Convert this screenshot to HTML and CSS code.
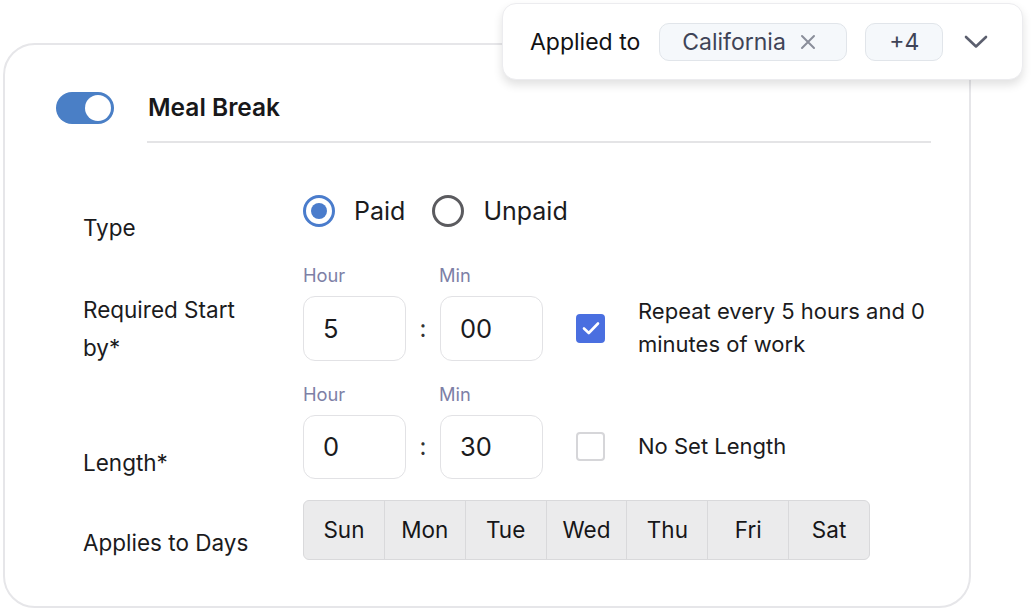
FILE: index.html
```html
<!DOCTYPE html>
<html lang="en">
<head>
<meta charset="utf-8">
<title>Meal Break</title>
<link rel="stylesheet" href="styles.css">
</head>
<body>
<div class="page">
  <div class="card">
    <div class="header">
      <span class="toggle"><span class="knob"></span></span>
      <span class="title">Meal Break</span>
    </div>
    <div class="divider"></div>

    <div class="row row-type">
      <div class="label label-type">Type</div>
      <div class="controls radios">
        <label class="radio"><span class="dot on"></span><span>Paid</span></label>
        <label class="radio"><span class="dot"></span><span>Unpaid</span></label>
      </div>
    </div>

    <div class="row row-start">
      <div class="label label-start">Required Start<br>by*</div>
      <div class="controls time-row">
        <div class="time">
          <div class="caps"><span class="cap">Hour</span><span class="cap">Min</span></div>
          <div class="inputs">
            <div class="field">5</div>
            <span class="colon">:</span>
            <div class="field">00</div>
          </div>
        </div>
        <div class="check-group">
          <span class="check on"><svg width="18" height="14" viewBox="0 0 18 14"><path d="M2 7.5 L6.8 12 L16 2.5" fill="none" stroke="#fff" stroke-width="2.6" stroke-linecap="round" stroke-linejoin="round"/></svg></span>
          <span class="check-text">Repeat every 5 hours and 0<br>minutes of work</span>
        </div>
      </div>
    </div>

    <div class="row row-length">
      <div class="label label-length">Length*</div>
      <div class="controls time-row">
        <div class="time">
          <div class="caps"><span class="cap">Hour</span><span class="cap">Min</span></div>
          <div class="inputs">
            <div class="field field-short">0</div>
            <span class="colon">:</span>
            <div class="field field-short">30</div>
          </div>
        </div>
        <div class="check-group check-group-short">
          <span class="check"></span>
          <span class="check-text">No Set Length</span>
        </div>
      </div>
    </div>

    <div class="row row-days">
      <div class="label label-days">Applies to Days</div>
      <div class="controls">
        <div class="days">
          <span class="day">Sun</span><span class="day">Mon</span><span class="day">Tue</span><span class="day">Wed</span><span class="day">Thu</span><span class="day">Fri</span><span class="day">Sat</span>
        </div>
      </div>
    </div>
  </div>

  <div class="popup">
    <span class="applied">Applied to</span>
    <span class="chip chip-ca">California
      <svg class="x" width="16" height="16" viewBox="0 0 16 16"><path d="M2 2 L14 14 M14 2 L2 14" stroke="#8a8e9a" stroke-width="2" stroke-linecap="round"/></svg>
    </span>
    <span class="chip chip-more">+4</span>
    <svg class="chev" width="24" height="14" viewBox="0 0 24 14"><path d="M2 2 L12 11.5 L22 2" fill="none" stroke="#5b5f6e" stroke-width="2.6" stroke-linecap="round" stroke-linejoin="round"/></svg>
  </div>
</div>
</body>
</html>
```

FILE: styles.css
```css
* { box-sizing: border-box; }
html, body { margin: 0; padding: 0; background: #fff; }
body {
  font-family: Inter, "Noto Sans", "Liberation Sans", sans-serif;
  color: #1b1b1d;
}
.page {
  position: relative;
  width: 1033px;
  height: 610px;
  padding: 43px 0 0 3px;
}
.card {
  width: 968px;
  height: 565px;
  border: 2px solid #e6e6e9;
  border-radius: 32px;
  padding: 47px 0 0 0;
}
.header {
  display: flex;
  align-items: center;
  padding-left: 51px;
  height: 32px;
}
.toggle {
  width: 58px;
  height: 32px;
  border-radius: 16px;
  background: #4a7fc6;
  display: flex;
  align-items: center;
  justify-content: flex-end;
  padding-right: 3px;
}
.knob {
  width: 26px;
  height: 26px;
  border-radius: 50%;
  background: #fff;
}
.title {
  margin-left: 34px;
  margin-bottom: 2px;
  font-size: 24.5px;
  font-weight: 600;
  color: #18181a;
}
.divider {
  margin: 17px 38px 0 142px;
  height: 1.5px;
  background: #e4e4e6;
}
.row {
  display: flex;
  align-items: flex-start;
  padding-left: 78px;
}
.label {
  width: 220px;
  flex: none;
  font-size: 22.5px;
  line-height: 26px;
  color: #1b1b1d;
}
.row-type { margin-top: 52px; height: 70px; }
.label-type { margin-top: 20px; }
.radios { display: flex; align-items: center; gap: 27px; height: 32px; }
.radio { display: flex; align-items: center; gap: 19px; font-size: 25px; color: #1b1b1d; }
.dot {
  width: 32px;
  height: 32px;
  border-radius: 50%;
  border: 3px solid #5b5b5f;
  display: flex;
  align-items: center;
  justify-content: center;
}
.dot.on { border-color: #4a7ccc; }
.dot.on::after {
  content: "";
  width: 16px;
  height: 16px;
  border-radius: 50%;
  background: #4a7ccc;
}
.row-start { height: 119px; }
.label-start { line-height: 38px; margin-top: 26px; }
.row-length { height: 116px; }
.label-length { margin-top: 66px; }
.time-row { display: flex; align-items: flex-end; }
.time { width: 240px; }
.caps { display: flex; height: 20px; margin-bottom: 11px; }
.cap { font-size: 18.3px; line-height: 20px; color: #7d80a6; }
.cap:first-child { width: 136px; }
.inputs { display: flex; align-items: center; }
.field {
  width: 103px;
  height: 65px;
  border: 1.5px solid #e2e2e5;
  border-radius: 12px;
  padding-left: 19px;
  display: flex;
  align-items: center;
  font-size: 25.5px;
  color: #1b1b1d;
}
.field-short { height: 64px; }
.colon { width: 34px; text-align: center; font-size: 24px; color: #333; }
.check-group {
  display: flex;
  align-items: center;
  margin-left: 33px;
  height: 65px;
}
.check-group-short { height: 64px; }
.check {
  width: 29px;
  height: 29px;
  border-radius: 4px;
  border: 2px solid #d6d6d9;
  flex: none;
  display: flex;
  align-items: center;
  justify-content: center;
}
.check.on { background: #4a6fe0; border-color: #4a6fe0; }
.check-text {
  margin-left: 33px;
  font-size: 22px;
  line-height: 33px;
  color: #1b1b1d;
}
.row-days { height: 60px; }
.label-days { margin-top: 30px; }
.days {
  display: flex;
  width: 567px;
  height: 60px;
  border: 1px solid #d9d9db;
  border-radius: 6px;
  background: #ebebec;
  overflow: hidden;
}
.day {
  flex: 1;
  display: flex;
  align-items: center;
  justify-content: center;
  font-size: 22.5px;
  color: #161618;
  border-left: 1px solid #d9d9db;
}
.day:first-child { border-left: none; }
.popup {
  position: absolute;
  left: 502px;
  top: 3px;
  width: 521px;
  height: 77px;
  background: #fff;
  border: 1px solid #ececef;
  border-radius: 14px;
  box-shadow: 0 5px 10px rgba(0, 0, 0, 0.12);
  display: flex;
  align-items: center;
  padding-left: 27px;
}
.applied { font-size: 23px; color: #121214; margin-right: 19px; }
.chip {
  height: 38px;
  border: 1.5px solid #e1e5ea;
  background: #f5f8fb;
  border-radius: 10px;
  display: flex;
  align-items: center;
  font-size: 23px;
  color: #3f4457;
}
.chip-ca { width: 188px; padding-left: 22px; }
.chip-ca .x { margin-left: 14px; }
.chip-more { width: 78px; justify-content: center; margin-left: 18px; }
.chev { margin-left: 21px; }
```
